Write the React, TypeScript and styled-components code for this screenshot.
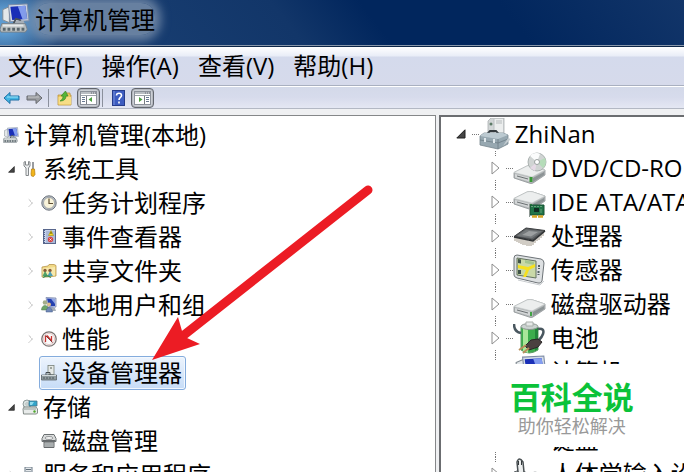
import React from "react";
import styled, { createGlobalStyle, css } from "styled-components";

const GlobalStyle = createGlobalStyle`
  * { box-sizing: border-box; }
  body {
    margin: 0;
    overflow: hidden;
    background: #eef0f4;
    color: #000;
    font-family: "Open Sans", "Noto Sans CJK SC", sans-serif;
    font-size: 24px;
    line-height: 34px;
  }
  button { font: inherit; color: inherit; background: none; border: 0; padding: 0; margin: 0; }
  ul { list-style: none; margin: 0; padding: 0; }
  svg { display: block; flex: none; }
`;

const Window = styled.div`
  height: 100vh;
  display: flex;
  flex-direction: column;
  overflow: hidden;
`;

const TitleBar = styled.header`
  flex: none;
  height: 46px;
  display: flex;
  align-items: flex-start;
  gap: 5px;
  padding-top: 3px;
  overflow: hidden;
  border-bottom: 1px solid #8998ac;
  background:
    radial-gradient(ellipse 60px 46px at 4px 22px, #5d9bd0 25%, rgba(79, 140, 196, 0) 100%),
    linear-gradient(52deg, #1c4377 0, #123669 240px, #01265d 310px, #01265d 74%, #123569 100%);
`;

const Title = styled.h1`
  margin: 0;
  height: 32px;
  font-size: 24px;
  font-weight: 400;
  line-height: 34px;
  border-radius: 14px;
  background: rgba(124, 145, 172, 0.8);
  box-shadow: 0 0 10px 6px rgba(124, 145, 172, 0.8);
`;

const MenuBar = styled.nav`
  flex: none;
  height: 40px;
  display: flex;
  align-items: center;
  gap: 19px;
  padding: 0 8px;
  border-top: 1px solid #0c2547;
  border-bottom: 1px solid #a9b0c0;
  background: linear-gradient(#fff 0, #e9edf7 9px, #d4daec 10px, #d6daeb 100%);
`;

const MenuButton = styled.button`
  white-space: nowrap;
`;

const ToolBar = styled.div`
  flex: none;
  height: 23px;
  display: flex;
  align-items: center;
  padding-left: 3px;
  border-top: 1px solid #fff;
  border-bottom: 1px solid #b3b8c4;
  background: linear-gradient(#d3d9e9, #d7dbec 50%, #e4e7f3);
`;

const ToolButton = styled.button<{ $on?: boolean; $gap: number }>`
  display: flex;
  align-items: center;
  justify-content: center;
  margin-left: ${(p) => p.$gap}px;
  ${(p) =>
    p.$on &&
    css`
      width: 23px;
      height: 20px;
      border: 1px solid #62666e;
      border-radius: 4px;
      background: #d0d3da;
      box-shadow: inset 0 0 2px #70757e;
    `}
`;

const Separator = styled.span<{ $gap: number }>`
  width: 1px;
  height: 18px;
  margin-left: ${(p) => p.$gap}px;
  background: #8b909c;
`;

const Panes = styled.main`
  flex: 1;
  min-height: 0;
  display: grid;
  grid-template-columns: minmax(0, 16fr) 3px minmax(0, 9fr);
  padding-top: 6px;
  background: #eff0f2;
`;

const Pane = styled.section<{ $side: "left" | "right" }>`
  position: relative;
  min-width: 0;
  overflow: hidden;
  background: #fff;
  ${(p) =>
    p.$side === "left"
      ? css`
          border-top: 1px solid #858789;
          border-right: 1px solid #858789;
          padding-top: 2px;
        `
      : css`
          grid-column: 3;
          border-top: 2px solid #6b6d70;
          border-left: 2px solid #6b6d70;
        `}
`;

const ConsoleRow = styled.li<{ $level: number }>`
  display: flex;
  align-items: center;
  height: 34px;
  padding-left: ${(p) => (p.$level === 0 ? 1 : p.$level * 19 - 11)}px;
`;

const ExpandButton = styled.button<{ $width: number }>`
  flex: none;
  display: flex;
  align-items: center;
  width: ${(p) => p.$width}px;
  height: 14px;
`;

const Spacer = styled.span<{ $width: number }>`
  flex: none;
  width: ${(p) => p.$width}px;
`;

const ConsoleItem = styled.button<{ $selected?: boolean }>`
  display: flex;
  align-items: center;
  gap: 5px;
  height: 34px;
  line-height: 32px;
  white-space: nowrap;
  padding: 0 3px 0 1px;
  border: 1px solid transparent;
  border-radius: 3px;
  ${(p) =>
    p.$selected &&
    css`
      border-color: #84acdd;
      background: linear-gradient(#edf4fd, #c6dcf7);
      box-shadow: inset 0 0 0 1px #f3f8fe;
    `}
`;

const DeviceRow = styled.li<{ $root?: boolean }>`
  display: flex;
  align-items: center;
  height: 34px;
  padding-left: ${(p) => (p.$root ? 15 : 50)}px;
`;

const Branch = styled.span`
  flex: none;
  display: flex;
  flex-direction: column;
  justify-content: space-between;
  width: 15px;
  height: 34px;
`;

const VerticalDots = styled.span`
  height: 5px;
  margin-left: 4px;
  border-left: 1px dotted #777;
`;

const HorizontalDots = styled.span`
  flex: none;
  width: 7px;
  border-top: 1px dotted #777;
`;

const DeviceItem = styled.button`
  display: flex;
  align-items: center;
  gap: 4px;
  height: 34px;
  white-space: nowrap;
`;

const ArrowMark = styled.svg`
  position: absolute;
  left: 150px;
  top: 68px;
  pointer-events: none;
`;

const Badge = styled.aside`
  position: absolute;
  left: 47px;
  top: 247px;
  display: flex;
  flex-direction: column;
  align-items: center;
  padding: 13px 22px 9px;
  background: #fff;
`;

const BadgeName = styled.strong`
  color: #0bc239;
  font-family: "Noto Sans CJK SC", sans-serif;
  font-size: 31px;
  font-weight: 700;
  line-height: 38px;
  white-space: nowrap;
`;

const BadgeNote = styled.span`
  color: #999;
  font-size: 18px;
  line-height: 23px;
  white-space: nowrap;
`;

/* ---------- icons ---------- */

const ComputerIcon = ({ size = 16 }: { size?: number }) => (
  <svg width={size} height={size} viewBox="0 0 32 32">
    <path d="M3 7l7-3v17l-7-3z" fill="#e3e7ea" stroke="#808a91" />
    <path d="M9 2l20-1 2 18-20 1z" fill="#d4dce6" stroke="#7d8ba5" />
    <path d="M11 4l16-1 2 14-16 1z" fill="#1a2fb7" />
    <path d="M19 3.500l8-.5 2 14-5 .3z" fill="#839df0" />
    <path d="M14 23l3-6 4 1 3 5" fill="none" stroke="#4b5358" strokeWidth="2" />
    <path d="M17 19h8l2 4h-12z" fill="#a8b0b7" />
    <path d="M2 22h25l2 6-2 3H1l-1-3z" fill="#bcc2c3" stroke="#778087" />
    <path d="M3 24h22" stroke="#e6eaea" strokeWidth="2" />
    <path d="M3 28h23" stroke="#59666c" strokeWidth="3" strokeDasharray="3 2" />
  </svg>
);

const ToolsIcon = () => (
  <svg width="16" height="16" viewBox="0 0 16 16">
    <path d="M2 1v4l2 2v7.500h2.500V7L8 5V1L6.500.5v3.500h-3V.5z" fill="#eceeef" stroke="#84888b" />
    <path d="M11 1v7" stroke="#777b80" strokeWidth="1.500" />
    <path d="M9.500 8h3l.5 5.500-1.500 2-2-.5-.5-2z" fill="#f1b51c" stroke="#b57b0c" strokeWidth=".7" />
  </svg>
);

const ClockIcon = () => (
  <svg width="16" height="16" viewBox="0 0 16 16">
    <circle cx="8" cy="8" r="7.200" fill="#b9bfc6" stroke="#6e757d" />
    <circle cx="8" cy="8" r="5.500" fill="#f8f3da" stroke="#8c9299" strokeWidth=".7" />
    <path d="M8 3.500V8.500h4" fill="none" stroke="#5d4d31" strokeWidth="1.200" />
  </svg>
);

const EventIcon = () => (
  <svg width="16" height="16" viewBox="0 0 16 16">
    <rect x="2.500" y=".5" width="12" height="14" fill="#c5d2ec" stroke="#58668c" />
    <path d="M3 1v14" stroke="#53628a" strokeWidth="2" strokeDasharray="1 1" />
    <path d="M5 3h9M5 5h9M5 7h9M5 9h9M5 11h9M5 13h9" stroke="#7d8cb4" strokeWidth=".7" />
    <path d="M10 1.500l2.500 5h-5z" fill="#f7dc23" stroke="#a38a00" strokeWidth=".5" />
    <path d="M10 3v2" stroke="#5b4d00" />
    <circle cx="9.500" cy="10.500" r="2.700" fill="#d94343" />
    <path d="M8.500 9.500l2 2m0-2l-2 2" stroke="#fff" strokeWidth=".8" />
  </svg>
);

const SharedFolderIcon = () => (
  <svg width="16" height="16" viewBox="0 0 16 16">
    <path d="M1 4l6-1 1-1.500h5l2 1V13l-9 1H1z" fill="#f1d986" stroke="#b7964b" strokeWidth=".8" />
    <path d="M1.500 5.500L14 4v8.500L2 14z" fill="#f8e9ad" />
    <circle cx="4" cy="7.500" r="1.700" fill="#8a5c38" />
    <circle cx="9" cy="7.500" r="1.700" fill="#8a5c38" />
    <path d="M1.500 13l2.500-5 3 5z" fill="#51a068" />
    <path d="M6.500 13L9 8l3 5z" fill="#4e9eb7" />
    <path d="M2 14.500q4-3 8 0" fill="none" stroke="#3e8c52" strokeWidth="1.300" />
  </svg>
);

const UsersIcon = () => (
  <svg width="16" height="16" viewBox="0 0 16 16">
    <path d="M5 .5l10 .5V10l-8 1z" fill="#c7d0ec" stroke="#6c7aa0" strokeWidth=".7" />
    <path d="M6 1.500l8 .5V9l-6 .5z" fill="#2440af" />
    <path d="M10 1.700l4 .3v5z" fill="#8fa4e2" />
    <path d="M10 11h4l1 3H9z" fill="#a5adb7" />
    <circle cx="4" cy="5.500" r="2.300" fill="#a5ae8b" />
    <path d="M.5 13c0-6 7-6 7 0z" fill="#6fa769" stroke="#4c774a" strokeWidth=".5" />
    <circle cx="8" cy="7.500" r="2" fill="#e0bf8d" />
    <path d="M5 15c0-6 6-6 6.500 0z" fill="#7189b6" stroke="#435b8b" strokeWidth=".5" />
  </svg>
);

const PerformanceIcon = () => (
  <svg width="16" height="16" viewBox="0 0 16 16">
    <circle cx="8" cy="8" r="7.200" fill="#fafafa" stroke="#7b7472" strokeWidth="1.300" />
    <circle cx="8" cy="8" r="5.600" fill="none" stroke="#d8a6a2" strokeWidth=".6" />
    <path d="M4.500 11V5.500l2-.5 4 5V5" fill="none" stroke="#c83330" strokeWidth="1.300" />
    <path d="M4.500 4.500l7 7" stroke="#823b3b" />
  </svg>
);

const DeviceManagerIcon = () => (
  <svg width="16" height="16" viewBox="0 0 16 16">
    <rect x="7" y=".5" width="6" height="9" fill="#e5e9e7" stroke="#788078" strokeWidth=".8" />
    <path d="M9 3h2" stroke="#586258" />
    <path d="M5 10V7.500h4V10" fill="none" stroke="#444b4f" />
    <path d="M.5 10h15v5H.5z" fill="#8f9b9f" stroke="#5c656a" strokeWidth=".8" />
    <path d="M1 10.500h14" stroke="#d3dadc" />
    <path d="M2 13h12" stroke="#4f595e" strokeDasharray="2 1" />
  </svg>
);

const StorageIcon = () => (
  <svg width="16" height="16" viewBox="0 0 16 16">
    <circle cx="5" cy="5" r="4" fill="#dce4e3" stroke="#788786" strokeWidth=".8" />
    <circle cx="5" cy="5" r="1.200" fill="#fff" stroke="#82908e" strokeWidth=".6" />
    <path d="M7 2h8v5H7z" fill="#31a5cb" stroke="#487488" strokeWidth=".8" />
    <path d="M8 3h4l-2 3H8z" fill="#91dcee" />
    <path d="M1 10l1-2h12l1.500 2v4l-1 1h-13z" fill="#e8ebea" stroke="#767f7c" strokeWidth=".9" />
    <path d="M2 10h12" stroke="#909b97" />
    <circle cx="12.500" cy="12.500" r="1.200" fill="#4fa82f" />
  </svg>
);

const DiskManagementIcon = () => (
  <svg width="16" height="16" viewBox="0 0 16 16">
    <path d="M3 1.500h10l2 4v3H1v-3z" fill="#d9dbdb" stroke="#6b7072" />
    <ellipse cx="8" cy="5" rx="4" ry="1.500" fill="#f5f5f5" stroke="#74797b" strokeWidth=".7" />
    <path d="M1.500 7.500h13M3 9h10v5.500H3z" fill="#c4c7c7" stroke="#65696b" />
    <path d="M4 11h8M4 13h8" stroke="#8d9496" />
  </svg>
);

const ServicesIcon = () => (
  <svg width="16" height="16" viewBox="0 0 16 16">
    <path d="M3 0h7v15H3z" fill="#e4e8eb" stroke="#6d7b87" />
    <path d="M4 2.500h5M4 5h5" stroke="#65727d" />
    <circle cx="11" cy="11" r="3" fill="#a2afb8" stroke="#637280" />
  </svg>
);

const ArrowIcon = ({ back }: { back?: boolean }) => (
  <svg width="17" height="14" viewBox="0 0 17 14">
    <path
      d={back ? "M1 7l6-5.500V5h9v4H7v3.500z" : "M16 7l-6-5.500V5H1v4h9v3.500z"}
      fill={back ? "#43b5e4" : "#9c9ea2"}
      stroke={back ? "#1e6fa4" : "#66696e"}
    />
    <path d={back ? "M4 6h11" : "M2 6h11"} stroke={back ? "#9ee2f7" : "#c4c6c8"} />
  </svg>
);

const FolderUpIcon = () => (
  <svg width="15" height="16" viewBox="0 0 15 16">
    <path d="M1 5h5l1-2h6v2h1v10H1z" fill="#edc962" stroke="#bd9440" strokeWidth=".8" />
    <path d="M1.500 7H14v7.500H1.500z" fill="#f6dd86" />
    <path d="M3 11c2-1 3-3 3-5H4l4.500-5L11 6H9c0 3-2 5-6 5z" fill="#55b53a" stroke="#2f7f20" strokeWidth=".6" />
  </svg>
);

const PanelIcon = ({ right }: { right?: boolean }) => (
  <svg width="17" height="14" viewBox="0 0 17 14">
    <rect x=".5" y=".5" width="16" height="13" fill="#fff" stroke="#8c919a" />
    <path d="M1 2h15" stroke="#b9bdc3" strokeWidth="2" />
    <path d="M11 2h1m1 0h1m1 0h1" stroke="#666b74" />
    <path d="M1 4.500h15" stroke="#9da2aa" />
    <path d={right ? "M10.500 5v8" : "M6.500 5v8"} stroke="#777b82" />
    <path d={right ? "M12 6.500h3M12 8.500h3M12 10.500h3" : "M2 6.500h3M2 8.500h3M2 10.500h3"} stroke="#697891" />
    <path d={right ? "M5 6v5l3.500-2.500z" : "M12 6v5L8.500 8.500z"} fill="#4d9f42" />
  </svg>
);

const HelpIcon = () => (
  <svg width="13" height="16" viewBox="0 0 13 16">
    <rect x=".5" y=".5" width="12" height="15" fill="#3d5cc0" stroke="#263c8b" />
    <path d="M2 1v14" stroke="#7891dc" />
    <path d="M4.500 5.500c0-3 5-3 5 0 0 2-2.500 2-2.500 4.500M7 11.500v2" fill="none" stroke="#fff" strokeWidth="1.600" />
  </svg>
);

const MachineIcon = () => (
  <svg width="32" height="32" viewBox="0 0 32 32">
    <path d="M9 3l3-3h13v22l-13 1-3-2z" fill="#d2d6d7" stroke="#a9aeb0" strokeWidth=".8" />
    <path d="M15 1h9v21h-9z" fill="#eceeee" />
    <path d="M15 1v20" stroke="#bcc1c3" />
    <path d="M17 3h6M17 5h6" stroke="#b6bbbc" />
    <circle cx="12" cy="6" r="1.500" fill="#5c7a66" />
    <path d="M9 17v-2l2-2h6l2 2v2" fill="none" stroke="#33393d" strokeWidth="1.800" />
    <path d="M1 18l4-3h19l5 2v9l-10 5-18-4z" fill="#97a8b1" stroke="#76858e" strokeWidth=".8" />
    <path d="M1 18l4-3h19l5 2-10 4z" fill="#bccad1" />
    <path d="M1 22l18 3 10-4M19 21v10" fill="none" stroke="#6c7c85" strokeWidth=".8" />
    <path d="M6 20v4m9-3v4" stroke="#e1e9ed" strokeWidth="2" />
    <path d="M29 20l3 1-8 7z" fill="#c6ced2" />
  </svg>
);

const DriveShape = () => (
  <>
    <path d="M1 18.500L14 12q3-1 6 0l12 4v5L20 29q-2 1-4 0L1 24z" fill="#b4b8b9" stroke="#8e9395" strokeWidth=".8" />
    <path d="M1 18.500L14 12q3-1 6 0l12 4-13 7z" fill="#eceeee" stroke="#c5c9ca" strokeWidth=".6" />
    <path d="M2 20l16 4v4L2 23.500z" fill="#d3d6d7" />
    <path d="M4 22l11 3" stroke="#6b7072" />
    <path d="M20 24l11-6v3l-11 7z" fill="#8d9496" />
    <path d="M18 24v4" stroke="#42a345" strokeWidth="2" />
  </>
);

const OpticalIcon = () => (
  <svg width="34" height="32" viewBox="0 0 34 32">
    <g transform="translate(0 2)"><DriveShape /></g>
    <circle cx="24" cy="10" r="9" fill="#d0d4d3" stroke="#9ca3a2" strokeWidth=".8" />
    <path d="M24 10L17 4c3-4 8-3 10-2z" fill="#fbfcfc" />
    <path d="M24 10l8-4c2 5 0 8-2 10z" fill="#b5dcb9" />
    <path d="M24 10l-2 9-5-3z" fill="#e5d9e5" />
    <circle cx="24" cy="10" r="2.500" fill="#fff" stroke="#9aa09f" />
    <path d="M18 25v5" stroke="#399837" strokeWidth="3" />
  </svg>
);

const ControllerIcon = () => (
  <svg width="34" height="32" viewBox="0 0 34 32">
    <g transform="translate(0 -6)"><DriveShape /></g>
    <path d="M17 19h14v10H17z" fill="#217448" stroke="#165033" />
    <path d="M21 22h5v4h-5z" fill="#112d22" />
    <path d="M18 20.500h12M27 24h3M27 26h3" stroke="#67a27c" strokeDasharray="2 1" />
    <path d="M19 30.500h11" stroke="#d8a728" strokeWidth="2.500" strokeDasharray="5 1" />
    <path d="M16.500 18v13" stroke="#8d9792" />
  </svg>
);

const ProcessorIcon = () => (
  <svg width="34" height="32" viewBox="0 0 34 32">
    <path d="M2 17v4m2-4v5m2-4v5m2-4v5m2-5v6m2-5v5m2-5v6m2-5v5m2-6v6m2-8v7m2-8v6m2-7v5m2-6v5m2-7v5m2-6v4" stroke="#a39a8b" />
    <path d="M1 16.500L13 8l19 2.500L20 20z" fill="#5b5e60" stroke="#3b3e40" />
    <path d="M4 16l9-6.500 16 1.800-10 7z" fill="#75797b" />
    <path d="M9 15l7-4 9 1-7 4.500z" fill="#9c9fa0" />
    <path d="M1 17l19 4 12-10" fill="none" stroke="#303335" strokeWidth="1.500" />
  </svg>
);

const SensorIcon = () => (
  <svg width="34" height="32" viewBox="0 0 34 32">
    <path d="M1 4q0-3 3-3l24 4q3 1 3 4l-2 18q-1 3-4 2L4 24q-3-1-3-3z" fill="#dde0e2" stroke="#6e7478" />
    <path d="M4 4l19 3v17L4 21z" fill="#c9d9a8" stroke="#637260" />
    <path d="M5 5l3 .5v4L5 9zM5 16h3v4H5z" fill="#405348" />
    <path d="M12 6l9 2v3l-9-2z" fill="#a4c58f" />
    <path d="M5 11l10 2 7-3v3l-6 3-3 7h-3l3-7-8-2z" fill="#f6e01e" />
    <path d="M26 11v4m-.5 2v4" stroke="#526063" strokeWidth="2" strokeDasharray="2 1" />
    <path d="M5 26l22 5 4-4" fill="none" stroke="#c8cccf" />
  </svg>
);

const DriveIcon = () => (
  <svg width="34" height="32" viewBox="0 0 34 32"><DriveShape /></svg>
);

const BatteryIcon = () => (
  <svg width="34" height="34" viewBox="0 0 34 34">
    <path d="M8 6v23q8 6 17 0V6z" fill="#3cad4c" stroke="#5d9b62" />
    <path d="M10 7v23l5 2V7z" fill="#a9e699" />
    <path d="M22 8v22l3-2V7z" fill="#23863a" />
    <ellipse cx="16.500" cy="5.500" rx="8.500" ry="3" fill="#cbd2d0" stroke="#8a948f" />
    <path d="M13 1h7v4h-7z" fill="#e6e9e8" stroke="#aab0ac" />
    <path d="M1 3q0 8 7 9M25 8q7-1 5 5-1 3-4 6" fill="none" stroke="#49575f" strokeWidth="2.500" />
    <path d="M12 25l6-6 7-1 4 3-4 5-9 3z" fill="#4b4140" stroke="#2b2929" />
    <path d="M13 24l-7 5m10-2l-6 5" stroke="#b98f5c" strokeWidth="2" />
  </svg>
);

const KeyboardIcon = () => (
  <svg width="34" height="32" viewBox="0 0 34 32">
    <path d="M3 12l21-6 8 9-16 5z" fill="#ddd" stroke="#777" />
    <path d="M7 13l17-5M9 15l17-5M12 17l16-5" stroke="#888" strokeWidth="2" strokeDasharray="2 1" />
  </svg>
);

const InputIcon = () => (
  <svg width="34" height="32" viewBox="0 0 34 32">
    <path d="M1 14l6-2 10 4-3 10H1z" fill="#a3a8aa" stroke="#5f6568" />
    <path d="M5 14L4 4q2-6 6 0l1 10q-3 3-6 0z" fill="#edefef" stroke="#4a5053" strokeWidth="1.500" />
    <path d="M5.500 3v4m3-4v4" stroke="#32373a" />
    <path d="M12 29q-1-14 10-15 9 0 10 15z" fill="#dcdfe0" stroke="#9da2a5" />
  </svg>
);

const OpenMark = ({ size }: { size: number }) => (
  <svg width={size} height={size} viewBox="0 0 10 10">
    <path d="M9 .8V9H.8z" fill="#454545" stroke="#202020" />
  </svg>
);

const ClosedMark = ({ faint }: { faint?: boolean }) => (
  <svg width={faint ? 8 : 10} height={faint ? 10 : 14} viewBox="0 0 10 14">
    <path
      d={faint ? "M2 2l5 5-5 5" : "M1 1l7 6-7 6z"}
      fill="none"
      stroke={faint ? "#999" : "#8d8d8d"}
      strokeDasharray={faint ? "1.500 1" : undefined}
      strokeWidth={faint ? 1.4 : 1}
    />
  </svg>
);

/* ---------- data ---------- */

type Node = {
  label: string;
  level: number;
  icon: React.ReactNode;
  state?: "open" | "closed";
  selected?: boolean;
};

const consoleTree: Node[] = [
  { label: "计算机管理(本地)", level: 0, icon: <ComputerIcon /> },
  { label: "系统工具", level: 1, icon: <ToolsIcon />, state: "open" },
  { label: "任务计划程序", level: 2, icon: <ClockIcon />, state: "closed" },
  { label: "事件查看器", level: 2, icon: <EventIcon />, state: "closed" },
  { label: "共享文件夹", level: 2, icon: <SharedFolderIcon />, state: "closed" },
  { label: "本地用户和组", level: 2, icon: <UsersIcon />, state: "closed" },
  { label: "性能", level: 2, icon: <PerformanceIcon />, state: "closed" },
  { label: "设备管理器", level: 2, icon: <DeviceManagerIcon />, selected: true },
  { label: "存储", level: 1, icon: <StorageIcon />, state: "open" },
  { label: "磁盘管理", level: 2, icon: <DiskManagementIcon /> },
  { label: "服务和应用程序", level: 1, icon: <ServicesIcon />, state: "closed" },
];

const devices: { label: string; icon: React.ReactNode }[] = [
  { label: "DVD/CD-ROM 驱动器", icon: <OpticalIcon /> },
  { label: "IDE ATA/ATAPI 控制器", icon: <ControllerIcon /> },
  { label: "处理器", icon: <ProcessorIcon /> },
  { label: "传感器", icon: <SensorIcon /> },
  { label: "磁盘驱动器", icon: <DriveIcon /> },
  { label: "电池", icon: <BatteryIcon /> },
  { label: "计算机", icon: <ComputerIcon size={34} /> },
  { label: "监视器", icon: <ComputerIcon size={34} /> },
  { label: "键盘", icon: <KeyboardIcon /> },
  { label: "人体学输入设备", icon: <InputIcon /> },
];

const menus = ["文件(F)", "操作(A)", "查看(V)", "帮助(H)"];

export default function App() {
  return (
    <Window>
      <GlobalStyle />
      <TitleBar>
        <ComputerIcon size={30} />
        <Title>计算机管理</Title>
      </TitleBar>
      <MenuBar aria-label="菜单">
        {menus.map((m) => (
          <MenuButton key={m}>{m}</MenuButton>
        ))}
      </MenuBar>
      <ToolBar role="toolbar">
        <ToolButton $gap={0} aria-label="后退"><ArrowIcon back /></ToolButton>
        <ToolButton $gap={6} aria-label="前进"><ArrowIcon /></ToolButton>
        <Separator $gap={5} />
        <ToolButton $gap={8} aria-label="向上"><FolderUpIcon /></ToolButton>
        <ToolButton $gap={5} $on aria-label="显示控制台树"><PanelIcon /></ToolButton>
        <Separator $gap={2} />
        <ToolButton $gap={9} aria-label="帮助"><HelpIcon /></ToolButton>
        <ToolButton $gap={6} $on aria-label="显示操作窗格"><PanelIcon right /></ToolButton>
      </ToolBar>
      <Panes>
        <Pane $side="left">
          <ul>
            {consoleTree.map((n) => (
              <ConsoleRow key={n.label} $level={n.level}>
                {n.state ? (
                  <ExpandButton $width={12} aria-label={n.label} aria-expanded={n.state === "open"}>
                    {n.state === "open" ? <OpenMark size={7} /> : <ClosedMark faint />}
                  </ExpandButton>
                ) : (
                  n.level > 0 && <Spacer $width={12} />
                )}
                <ConsoleItem $selected={n.selected}>
                  {n.icon}
                  {n.label}
                </ConsoleItem>
              </ConsoleRow>
            ))}
          </ul>
          <ArrowMark width="226" height="180" viewBox="150 184 226 180">
            <path d="M368 190L184 335" stroke="#ec1c24" strokeWidth="9" strokeLinecap="round" />
            <path d="M152 360L178 317L182 331L187 338L200 344z" fill="#ec1c24" />
          </ArrowMark>
        </Pane>
        <Pane $side="right">
          <ul>
            <DeviceRow $root>
              <ExpandButton $width={16} aria-label="ZhiNan" aria-expanded>
                <OpenMark size={10} />
              </ExpandButton>
              <HorizontalDots />
              <DeviceItem><MachineIcon />ZhiNan</DeviceItem>
            </DeviceRow>
            {devices.map((d) => (
              <DeviceRow key={d.label}>
                <Branch>
                  <VerticalDots />
                  <ExpandButton $width={10} aria-label={d.label} aria-expanded={false}>
                    <ClosedMark />
                  </ExpandButton>
                  <VerticalDots />
                </Branch>
                <HorizontalDots />
                <DeviceItem>{d.icon}{d.label}</DeviceItem>
              </DeviceRow>
            ))}
          </ul>
          <Badge>
            <BadgeName>百科全说</BadgeName>
            <BadgeNote>助你轻松解决</BadgeNote>
          </Badge>
        </Pane>
      </Panes>
    </Window>
  );
}
